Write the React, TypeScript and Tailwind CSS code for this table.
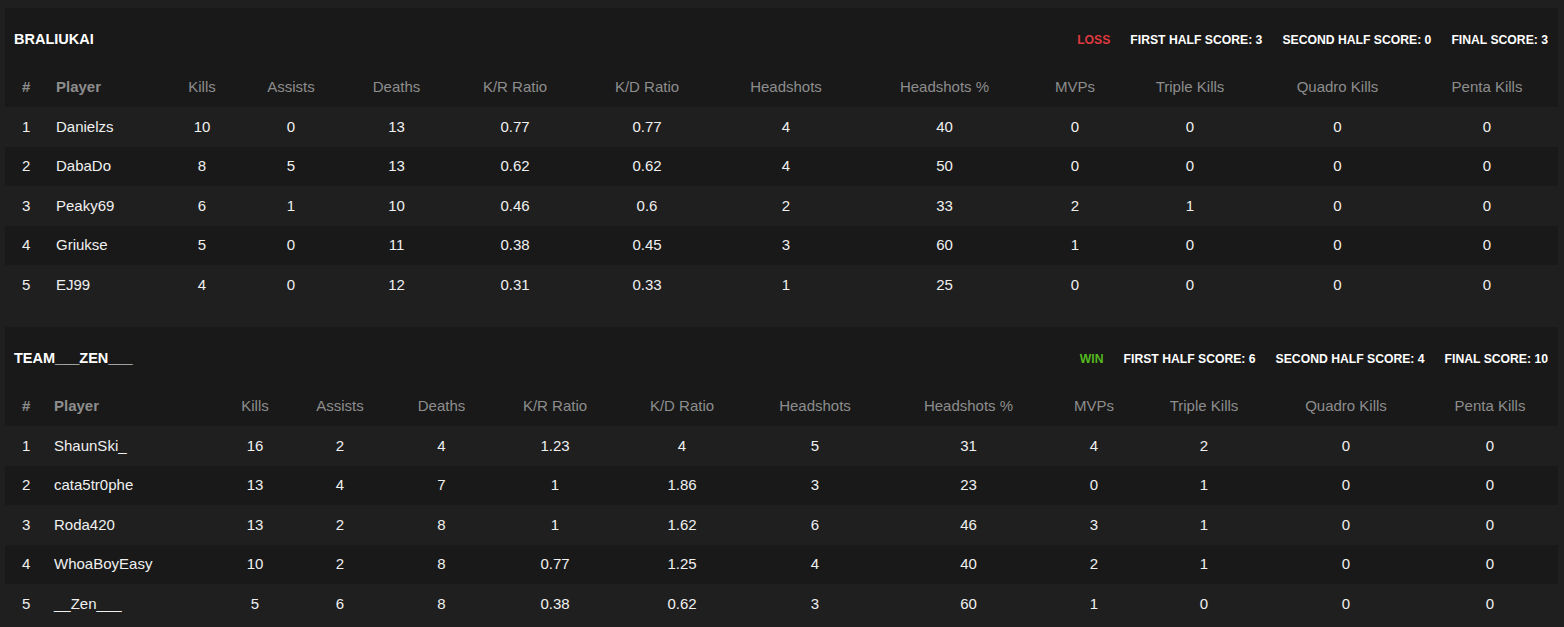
import React from 'react';

type Row = (string | number)[];

const heads = ['#', 'Player', 'Kills', 'Assists', 'Deaths', 'K/R Ratio', 'K/D Ratio', 'Headshots', 'Headshots %', 'MVPs', 'Triple Kills', 'Quadro Kills', 'Penta Kills'];

const teams = [
  {
    name: 'BRALIUKAI',
    result: 'LOSS',
    first: 3,
    second: 0,
    final: 3,
    cols: 'grid-cols-[51px_111px_70px_108px_103px_134px_130px_148px_169px_92px_138px_157px_142px]',
    rows: [
      [1, 'Danielzs', 10, 0, 13, '0.77', '0.77', 4, 40, 0, 0, 0, 0],
      [2, 'DabaDo', 8, 5, 13, '0.62', '0.62', 4, 50, 0, 0, 0, 0],
      [3, 'Peaky69', 6, 1, 10, '0.46', '0.6', 2, 33, 2, 1, 0, 0],
      [4, 'Griukse', 5, 0, 11, '0.38', '0.45', 3, 60, 1, 0, 0, 0],
      [5, 'EJ99', 4, 0, 12, '0.31', '0.33', 1, 25, 0, 0, 0, 0],
    ] as Row[],
  },
  {
    name: 'TEAM___ZEN___',
    result: 'WIN',
    first: 6,
    second: 4,
    final: 10,
    cols: 'grid-cols-[49px_170px_62px_108px_95px_132px_122px_144px_163px_88px_132px_152px_136px]',
    rows: [
      [1, 'ShaunSki_', 16, 2, 4, '1.23', '4', 5, 31, 4, 2, 0, 0],
      [2, 'cata5tr0phe', 13, 4, 7, '1', '1.86', 3, 23, 0, 1, 0, 0],
      [3, 'Roda420', 13, 2, 8, '1', '1.62', 6, 46, 3, 1, 0, 0],
      [4, 'WhoaBoyEasy', 10, 2, 8, '0.77', '1.25', 4, 40, 2, 1, 0, 0],
      [5, '__Zen___', 5, 6, 8, '0.38', '0.62', 3, 60, 1, 0, 0, 0],
    ] as Row[],
  },
];

function cellClass(i: number) {
  if (i === 0) return 'pl-[17px] text-left';
  if (i === 1) return 'text-left whitespace-nowrap';
  return 'text-center whitespace-nowrap';
}

function TeamCard({ team }: { team: (typeof teams)[number] }) {
  return (
    <div className="bg-[#191919]">
      <div className="h-[59px] flex items-baseline justify-between pl-[9px] pr-[10px] pt-[21px]">
        <h2 className="text-[14.5px] font-bold text-white">{team.name}</h2>
        <div className="flex items-baseline gap-[20px] text-[12.2px] font-bold text-white">
          <span className={team.result === 'WIN' ? 'text-[#54b81e]' : 'text-[#de3a3f]'}>{team.result}</span>
          <span>FIRST HALF SCORE: {team.first}</span>
          <span>SECOND HALF SCORE: {team.second}</span>
          <span>FINAL SCORE: {team.final}</span>
        </div>
      </div>

      <div className={`grid ${team.cols} h-[40px] items-center text-[15px] text-[#8d8d8d]`}>
        {heads.map((h, i) => (
          <div key={h} className={`${cellClass(i)} ${i < 2 ? 'font-bold' : ''}`}>{h}</div>
        ))}
      </div>

      {team.rows.map((row, r) => (
        <div
          key={r}
          className={`grid ${team.cols} h-[39.5px] items-center text-[15px] text-[#f0f0f0] ${r % 2 === 0 ? 'bg-[#1f1f1f]' : 'bg-[#191919]'}`}
        >
          {row.map((v, i) => (
            <div key={i} className={cellClass(i)}>{v}</div>
          ))}
        </div>
      ))}
    </div>
  );
}

export default function App() {
  return (
    <div className="min-h-screen bg-[#1f1f1f] pt-2 pl-[5px] pr-[6px] font-['Liberation_Sans',Arial,sans-serif]">
      <div className="flex flex-col gap-[22.5px]">
        {teams.map((t) => (
          <TeamCard key={t.name} team={t} />
        ))}
      </div>
    </div>
  );
}
